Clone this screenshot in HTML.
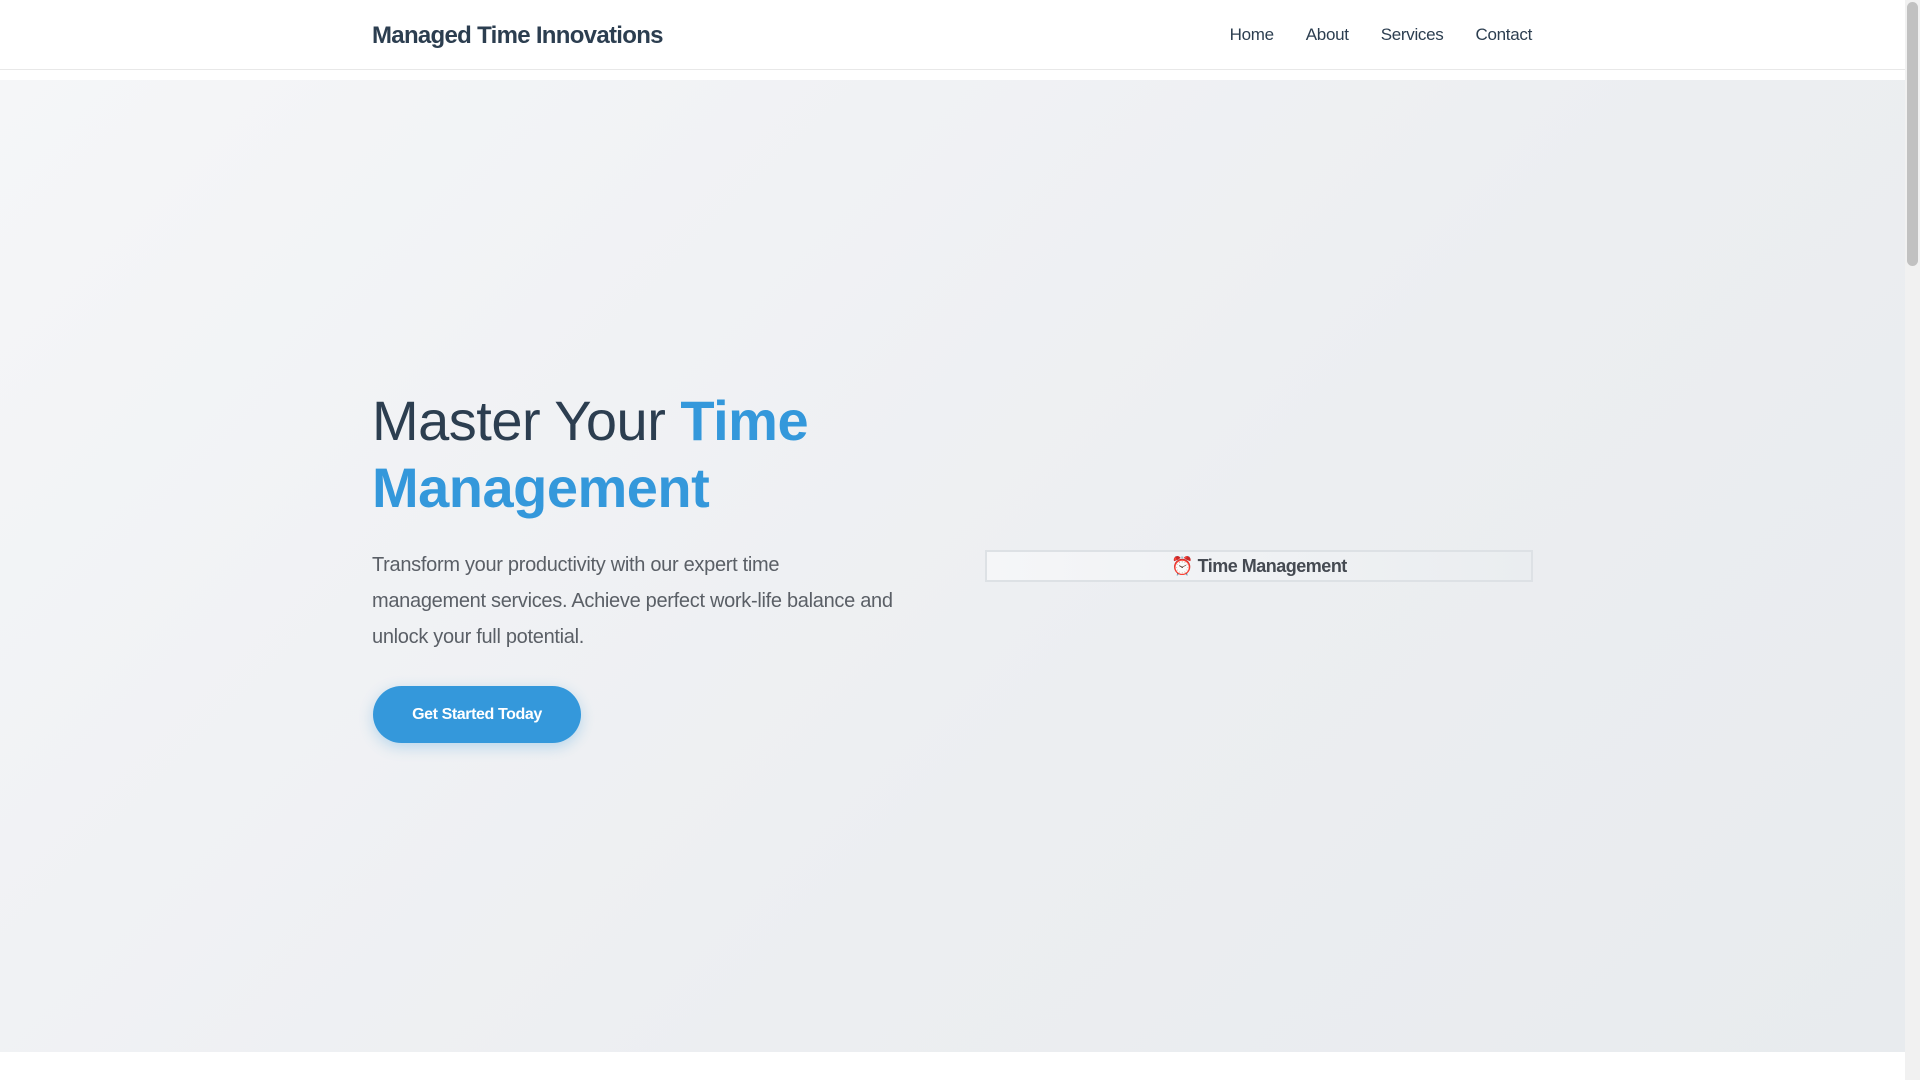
<!DOCTYPE html>
<html><head><meta charset="utf-8"><style>
*{margin:0;padding:0;box-sizing:border-box}
html,body{width:1920px;height:1080px;overflow:hidden;background:#fff;font-family:"Liberation Sans",Arial,sans-serif}
.hdr{position:absolute;left:0;top:0;width:1905px;height:70px;background:#fff;border-bottom:1px solid #e8e8e8}
.logo{position:absolute;left:372px;top:22px;font-size:24px;font-weight:bold;color:#2c3e50;letter-spacing:-0.7px}
.nav{position:absolute;right:373px;top:25px;font-size:17px;color:#2c3e50;display:flex;gap:32px;letter-spacing:-0.3px}
.hero{position:absolute;left:0;top:80px;width:1905px;height:972px;background:linear-gradient(135deg,#f5f6f8 0%,#eceef1 60%,#e8ebee 100%)}
h1{position:absolute;left:372px;top:387px;font-size:56px;line-height:67px;font-weight:normal;color:#2c3e50;letter-spacing:-0.5px}
h1 b{color:#3498db}
p{position:absolute;left:372px;top:547px;white-space:nowrap;font-size:20px;line-height:36px;color:#5a5f66;letter-spacing:-0.3px}
.btn{position:absolute;left:373px;top:686px;width:208px;height:57px;border-radius:29px;background:#3498db;color:#fff;font-weight:bold;font-size:16px;letter-spacing:-0.4px;text-align:center;line-height:57px;box-shadow:0 4px 14px rgba(52,152,219,.3)}
.box{position:absolute;left:985px;top:550px;width:548px;height:32px;border:2px solid #dde1e5;background:linear-gradient(90deg,#f5f6f8,#eaedf0);text-align:center;font-size:18px;font-weight:bold;color:#454a52;line-height:28px;letter-spacing:-0.5px}
.sb{position:absolute;right:0;top:0;width:15px;height:1080px;background:#f1f1f1}
.th{position:absolute;right:2px;top:2px;width:11px;height:264px;background:#c1c1c1;border-radius:6px}
</style></head><body>
<div class="hdr"><div class="logo">Managed Time Innovations</div>
<div class="nav"><span>Home</span><span>About</span><span>Services</span><span>Contact</span></div></div>
<div class="hero">
</div>
<h1>Master Your <b>Time<br>Management</b></h1>
<p>Transform your productivity with our expert time<br>management services. Achieve perfect work-life balance and<br>unlock your full potential.</p>
<div class="btn">Get Started Today</div>
<div class="box"><span style="color:#e0312b">⏰</span> Time Management</div>
<div class="sb"><div class="th"></div></div>
</body></html>
